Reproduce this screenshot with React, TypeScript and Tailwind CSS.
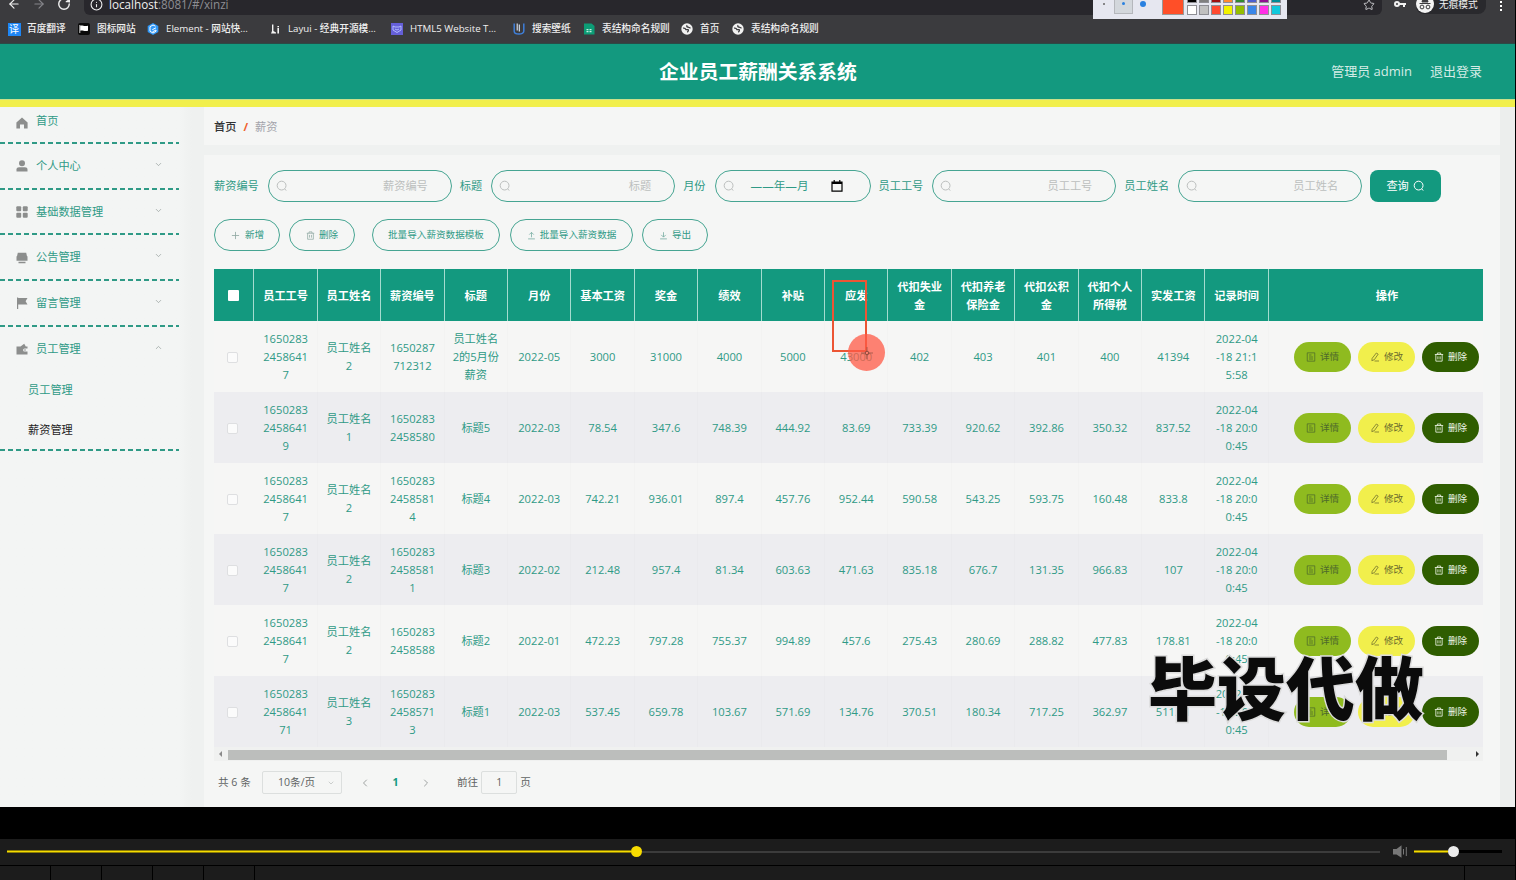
import React from "react";
import {
  ArrowLeft,
  ArrowRight,
  ChevronDown,
  ChevronLeft,
  ChevronRight,
  ChevronUp,
  Info,
  Plus,
  RotateCw,
  Star,
} from "lucide-react";

type IconProps = { className?: string };

function SearchIcon({ className }: IconProps) {
  return (
    <svg viewBox="0 0 12 12" className={className} fill="none" stroke="currentColor" strokeWidth="1">
      <circle cx="5.6" cy="5.6" r="4.4" />
      <path d="M8.7 8.8 10.2 10.6" />
    </svg>
  );
}

function TrashIcon({ className }: IconProps) {
  return (
    <svg viewBox="0 0 12 12" className={className} fill="none" stroke="currentColor" strokeWidth="1">
      <path d="M1 3h10M2.2 3v8h7.6V3M4 3V1.2h4V3M4.7 5.2v3.6M7.3 5.2v3.6" />
    </svg>
  );
}

function DocIcon({ className }: IconProps) {
  return (
    <svg viewBox="0 0 12 12" className={className} fill="none" stroke="currentColor" strokeWidth="0.9">
      <path d="M1.5 1h9v10h-9zM3.6 3.6h3M3.6 6h4.8M3.6 8.4h4.8" />
    </svg>
  );
}

function EditIcon({ className }: IconProps) {
  return (
    <svg viewBox="0 0 12 12" className={className} fill="none" stroke="currentColor" strokeWidth="0.9">
      <path d="M7.6 1.2 9.8 2.6 5.2 9.2 2.2 10.4 2.6 7.6zM5.4 10.8h5.4" />
    </svg>
  );
}

function UploadIcon({ className }: IconProps) {
  return (
    <svg viewBox="0 0 12 12" className={className} fill="none" stroke="currentColor" strokeWidth="1">
      <path d="M1.5 10.5h9M6 8.4V2M3 4.8 6 1.8l3 3" />
    </svg>
  );
}

function DownloadIcon({ className }: IconProps) {
  return (
    <svg viewBox="0 0 12 12" className={className} fill="none" stroke="currentColor" strokeWidth="1">
      <path d="M1.5 10.5h9M6 1.6V8M3 5.2l3 3 3-3" />
    </svg>
  );
}

function CalendarIcon({ className }: IconProps) {
  return (
    <svg viewBox="0 0 12 12" className={className} fill="none" stroke="currentColor" strokeWidth="1.2">
      <path d="M1 2h10v9.2H1zM3.2 0v2M8.8 0v2" />
      <path d="M1 3h10" strokeWidth="2" />
    </svg>
  );
}

function HomeIcon({ className }: IconProps) {
  return (
    <svg viewBox="0 0 12 12" className={className} fill="currentColor">
      <path d="M6 .6 11.6 5.500V11.500H8V7.500H4v4H.4v-6z" />
    </svg>
  );
}

function UserIcon({ className }: IconProps) {
  return (
    <svg viewBox="0 0 12 12" className={className} fill="currentColor">
      <circle cx="6" cy="3.2" r="3" />
      <path d="M.5 9.5C.5 8 1.6 7.2 3 7.2h6c1.4 0 2.5.8 2.5 2.3V11.6H.5z" />
    </svg>
  );
}

function GridIcon({ className }: IconProps) {
  return (
    <svg viewBox="0 0 12 12" className={className} fill="currentColor">
      <rect x="0.3" y="0.3" width="4.9" height="4.9" rx="1" />
      <rect x="6.8" y="0.3" width="4.9" height="4.9" rx="1" />
      <rect x="0.3" y="6.8" width="4.9" height="4.9" rx="1" />
      <rect x="6.8" y="6.8" width="4.9" height="4.9" rx="1" />
    </svg>
  );
}

function PrinterIcon({ className }: IconProps) {
  return (
    <svg viewBox="0 0 12 12" className={className} fill="currentColor">
      <path d="M1.8.8h8.400l.8 3.500H1zM.5 4.200h11v4.600H.5zM2.500 9.800h7v1.400h-7z" />
    </svg>
  );
}

function FlagIcon({ className }: IconProps) {
  return (
    <svg viewBox="0 0 12 12" className={className} fill="currentColor">
      <path d="M1 .5h1.200V12H1zM2.200 1h9.300L9.600 4.300l1.900 3.300H2.200z" />
    </svg>
  );
}

function WalletIcon({ className }: IconProps) {
  return (
    <svg viewBox="0 0 12 12" className={className} fill="currentColor">
      <path d="M.5 3.500h4L8.200.8l1.600 2.700h1.700v2H8.600a1.500 1.500 0 0 0 0 3h2.900v3H.5z" />
      <circle cx="9" cy="7" r=".8" />
    </svg>
  );
}

function GlobeIcon() {
  return (
    <svg viewBox="0 0 12 12" className="size-3">
      <circle cx="6" cy="6" r="5.700" fill="#f1f1f1" />
      <path
        d="M2 5.200c1.500-.4 2.500.3 3 1.500h2.200c.6.8-.2 2-1 2.600M6.200 2.300c-.9.8-.3 1.600.6 1.700.8.1.9 1 2.800.8"
        stroke="#3b3b3e"
        strokeWidth="1.300"
        fill="none"
      />
    </svg>
  );
}

const bookmarks = [
  {
    width: "w-[70px]",
    label: "百度翻译",
    icon: <span className="flex size-[13px] shrink-0 items-center justify-center bg-[#1e86f5] text-[10px] leading-none text-white">译</span>,
  },
  {
    width: "w-[69px]",
    label: "图标网站",
    icon: (
      <svg viewBox="0 0 12 12" className="size-3">
        <rect width="12" height="12" rx="2" fill="#0a0a0a" />
        <path d="M1.800 2v8" stroke="#fff" strokeWidth=".8" />
        <path d="M2.200 2.700c2-1 3.500 1 7.800 0v5c-4 1-5.500-1-7.800 0z" fill="#fff" />
      </svg>
    ),
  },
  {
    width: "w-[122px]",
    label: "Element - 网站快...",
    icon: (
      <svg viewBox="0 0 12 12" className="size-3">
        <path d="M6 0l5.300 3v6L6 12 .7 9V3z" fill="#2f97f7" />
        <path d="M8.500 3.200 6 2 3 3.700v4.600L6 10l3-1.700V7L5.500 8.800M9 4.800 5.300 6.700" stroke="#fff" strokeWidth="1" fill="none" />
      </svg>
    ),
  },
  {
    width: "w-[122px]",
    label: "Layui - 经典开源模...",
    icon: (
      <svg viewBox="0 0 12 12" className="size-3" fill="#f4f4f4">
        <path d="M3 1.500h1.400v6.500L7 9.600V10.600H2L3 8zM8.400 5h1.600v5.600H8.400zM8.400 3h1.600v1.200H8.400z" />
      </svg>
    ),
  },
  {
    width: "w-[122px]",
    label: "HTML5 Website T...",
    icon: (
      <svg viewBox="0 0 12 12" className="size-3">
        <rect width="12" height="12" fill="#655fd8" />
        <path d="M2 3l2 1h4l2-1v4L6 9.500 2 7z" fill="none" stroke="#b9c4ff" strokeWidth=".9" />
        <path d="M4 6l2 1 2-1" fill="none" stroke="#b9c4ff" strokeWidth=".9" />
      </svg>
    ),
  },
  {
    width: "w-[70px]",
    label: "搜索壁纸",
    icon: (
      <svg viewBox="0 0 12 12" className="size-3" fill="none">
        <path d="M1.200.5v7.700c0 3.800 9.600 3.800 9.600 0V.5" stroke="#3f7fd9" strokeWidth="1.500" />
        <path d="M4.200.5v7M6.300 1.500v7" stroke="#dfe9f7" strokeWidth="1.100" />
      </svg>
    ),
  },
  {
    width: "w-[98px]",
    label: "表结构命名规则",
    icon: (
      <svg viewBox="0 0 12 12" className="size-3">
        <path d="M1 .5h7.500L11.500 3v8.500H1z" fill="#0c9d76" />
        <path d="M3.500 6h2v1.200h-2zM6.500 6h2v1.200h-2zM3.500 8h2v1.200h-2zM6.500 8h2v1.200h-2z" fill="#c7efe2" />
      </svg>
    ),
  },
  { width: "w-[51px]", label: "首页", icon: <GlobeIcon /> },
  { width: "w-[100px]", label: "表结构命名规则", icon: <GlobeIcon /> },
];

const menu = [
  { label: "个人中心", Icon: UserIcon },
  { label: "基础数据管理", Icon: GridIcon },
  { label: "公告管理", Icon: PrinterIcon },
  { label: "留言管理", Icon: FlagIcon },
];

const columns = [
  "员工工号",
  "员工姓名",
  "薪资编号",
  "标题",
  "月份",
  "基本工资",
  "奖金",
  "绩效",
  "补贴",
  "应发",
  "代扣失业\n金",
  "代扣养老\n保险金",
  "代扣公积\n金",
  "代扣个人\n所得税",
  "实发工资",
  "记录时间",
];

const rows = [
  ["1650283\n2458641\n7", "员工姓名\n2", "1650287\n712312", "员工姓名\n2的5月份\n薪资", "2022-05", "3000", "31000", "4000", "5000", "43000", "402", "403", "401", "400", "41394", "2022-04\n-18 21:1\n5:58"],
  ["1650283\n2458641\n9", "员工姓名\n1", "1650283\n2458580", "标题5", "2022-03", "78.54", "347.6", "748.39", "444.92", "83.69", "733.39", "920.62", "392.86", "350.32", "837.52", "2022-04\n-18 20:0\n0:45"],
  ["1650283\n2458641\n7", "员工姓名\n2", "1650283\n2458581\n4", "标题4", "2022-03", "742.21", "936.01", "897.4", "457.76", "952.44", "590.58", "543.25", "593.75", "160.48", "833.8", "2022-04\n-18 20:0\n0:45"],
  ["1650283\n2458641\n7", "员工姓名\n2", "1650283\n2458581\n1", "标题3", "2022-02", "212.48", "957.4", "81.34", "603.63", "471.63", "835.18", "676.7", "131.35", "966.83", "107", "2022-04\n-18 20:0\n0:45"],
  ["1650283\n2458641\n7", "员工姓名\n2", "1650283\n2458588", "标题2", "2022-01", "472.23", "797.28", "755.37", "994.89", "457.6", "275.43", "280.69", "288.82", "477.83", "178.81", "2022-04\n-18 20:0\n0:45"],
  ["1650283\n2458641\n71", "员工姓名\n3", "1650283\n2458571\n3", "标题1", "2022-03", "537.45", "659.78", "103.67", "571.69", "134.76", "370.51", "180.34", "717.25", "362.97", "511.31", "2022-04\n-18 20:0\n0:45"],
];

const palette = [
  ["#000000", "#7f7f7f", "#a01010", "#ff8a30", "#2f8a2f", "#4a5fd0", "#8f1090", "#008b95"],
  ["#ffffff", "#c0c0c0", "#ff4a30", "#f2f200", "#94bd00", "#3a86e8", "#ff2fe6", "#10c8dc"],
];

function BrowserChrome() {
  return (
    <div className="relative flex h-11 shrink-0 flex-col border-b border-[#2b4a46] bg-[#3b3b3e] text-[#f0f0f0]">
      <div className="flex h-[15px] items-start overflow-hidden">
        <div className="flex w-[84px] shrink-0 items-center gap-[11px] pl-[7px]">
          <ArrowLeft className="-mt-[3px] size-[14px]" />
          <ArrowRight className="-mt-[3px] size-[14px] text-[#85858a]" />
          <RotateCw className="-mt-[3px] size-[14px]" strokeWidth={2.4} />
        </div>
        <div className="flex h-[15px] w-[1298px] items-start rounded-b-md bg-[#28272c] pl-[6px]">
          <Info className="-mt-0.5 size-[13px]" />
          <span className="-mt-[5px] ml-1.5 text-[11.700px] leading-[18px]">
            localhost<span className="text-[#8d8d92]">:8081/#/xinzi</span>
          </span>
          <Star className="mr-[7px] -mt-px ml-auto size-3 text-[#c4c4c8]" />
        </div>
        <svg viewBox="0 0 12 8" className="mt-px ml-3 h-2 w-3" fill="none" stroke="#f0f0f0">
          <circle cx="3" cy="3" r="2" strokeWidth="2" />
          <path d="M5 3h7M10 3v3" strokeWidth="2" />
        </svg>
        <div className="ml-[10px] flex h-[14px] w-[70px] items-start rounded-b-lg bg-[#29292d]">
          <svg viewBox="0 0 18 18" className="-mt-[5px] size-[18px] shrink-0">
            <circle cx="9" cy="9" r="9" fill="#f4f4f4" />
            <path d="M3.500 8.500h11M6 7l.8-3h4.400l.8 3z" stroke="#3b3b3e" fill="#3b3b3e" />
            <circle cx="6" cy="12" r="1.900" stroke="#3b3b3e" fill="none" />
            <circle cx="12" cy="12" r="1.900" stroke="#3b3b3e" fill="none" />
          </svg>
          <span className="-mt-[4px] ml-[5px] text-[9.700px] leading-[18px] whitespace-nowrap">无痕模式</span>
        </div>
        <div className="mt-px ml-[14px] flex flex-col gap-[2px]">
          <i className="size-[2px] bg-white" />
          <i className="size-[2px] bg-white" />
          <i className="size-[2px] bg-white" />
        </div>
      </div>
      <div className="flex h-7 items-center pt-px pl-2">
        {bookmarks.map((item, i) => (
          <div key={i} className={`flex shrink-0 items-center gap-[7px] whitespace-nowrap ${item.width}`}>
            <span className="flex w-3 shrink-0 justify-center">{item.icon}</span>
            <span className="text-[9.700px] font-medium">{item.label}</span>
          </div>
        ))}
      </div>

      {/* Annotation palette over the browser */}
      <div className="absolute top-0 left-[1093px] flex h-[19px] w-[194px] items-start bg-[#e6e7f0]">
        <div className="flex h-2 w-[21px] items-center justify-center">
          <i className="size-[2px] rounded-full bg-[#666]" />
        </div>
        <div className="flex h-[14px] w-[19px] justify-center border border-t-0 border-[#b5b7bc] bg-[#d3d7dc] pt-[2px]">
          <i className="size-[3px] rounded-full bg-[#2a80e0]" />
        </div>
        <i className="mt-px ml-[7px] size-[6px] rounded-full bg-[#2a80e0]" />
        <div className="ml-[16px] h-[15px] w-[22px] border border-t-0 border-[#999] bg-[#ff4f28]" />
        <div className="ml-[3px] flex flex-col gap-[2px]">
          {palette.map((line, i) => (
            <div key={i} className="flex gap-[2px]">
              {line.map((color) => (
                <i
                  key={color}
                  className={`w-[10px] border border-[#8e8e94] ${i === 0 ? "h-[3px] border-t-0" : "h-[10px]"}`}
                  style={{ backgroundColor: color }}
                />
              ))}
            </div>
          ))}
        </div>
      </div>
    </div>
  );
}

function Sidebar() {
  return (
    <aside className="w-[204px] shrink-0 bg-linear-to-r from-[#f3f5f4] from-88% to-[#eff1f0] to-94% text-[11.200px] text-[#2f9a86]">
      <div className="w-[179px]">
        <div className="flex h-[35px] items-center pb-[6px] pl-4">
          <HomeIcon className="mt-[3px] mr-2 size-3 text-[#8c8e8d]" />
          首页
        </div>
        <DashedLine />
        {menu.map(({ label, Icon }) => (
          <React.Fragment key={label}>
            <div className="flex h-[43.700px] items-center pt-px pr-4 pl-4">
              <Icon className="mr-2 size-3 text-[#8c8e8d]" />
              {label}
              <ChevronDown className="-mt-1 ml-auto size-[9px] text-[#8f9a97]" strokeWidth={1.8} />
            </div>
            <DashedLine />
          </React.Fragment>
        ))}
        <div className="flex h-[43.700px] items-center pt-px pr-4 pl-4">
          <WalletIcon className="mr-2 size-3 text-[#8c8e8d]" />
          员工管理
          <ChevronUp className="-mt-1 ml-auto size-[9px] text-[#8f9a97]" strokeWidth={1.8} />
        </div>
        <div className="flex h-[39.500px] items-center pt-px pl-7">员工管理</div>
        <div className="flex h-[39.500px] items-center pt-px pl-7 text-[#1f1f1f]">薪资管理</div>
        <DashedLine />
      </div>
    </aside>
  );
}

function DashedLine() {
  return (
    <div className="h-[2px] bg-[repeating-linear-gradient(90deg,#2f9a86_0,#2f9a86_5px,transparent_5px,transparent_8px)]" />
  );
}

function Field({ label }: { label: string }) {
  return (
    <label className="mr-2 flex items-center">
      {label}
      <span className="ml-[9px] flex h-8 w-[184px] items-center justify-between rounded-full border border-[#46a592] pr-[23px] pl-[7px] text-[#bcbfbe]">
        <SearchIcon className="size-3" />
        {label}
      </span>
    </label>
  );
}

function SearchForm() {
  return (
    <div className="flex h-8 items-center text-[11.200px] whitespace-nowrap text-[#2f9a86]">
      <Field label="薪资编号" />
      <Field label="标题" />
      <label className="mr-2 flex items-center">
        月份
        <span className="ml-[9px] flex h-8 w-[156px] items-center rounded-full border border-[#46a592] pl-[7px]">
          <SearchIcon className="mr-4 size-3 text-[#bcbfbe]" />
          <span className="text-[11.600px]">——年—月</span>
          <CalendarIcon className="ml-[22px] size-3 text-black" />
        </span>
      </label>
      <Field label="员工工号" />
      <Field label="员工姓名" />
      <button className="flex h-8 w-[71px] items-center justify-center gap-1 rounded-lg bg-[#13997f] text-white">
        查询
        <SearchIcon className="size-3" />
      </button>
    </div>
  );
}

function PillButton({ icon, label, className }: { icon?: React.ReactNode; label: string; className: string }) {
  return (
    <button className={`flex h-8 items-center justify-center gap-1 rounded-full border border-[#46a592] ${className}`}>
      {icon}
      {label}
    </button>
  );
}

function Toolbar() {
  return (
    <div className="mt-[17px] flex text-[9.600px] text-[#2f9a86]">
      <PillButton className="mr-[9px] w-[66px]" icon={<Plus className="size-[11px] text-[#8fa8a2]" strokeWidth={1.8} />} label="新增" />
      <PillButton className="mr-[17px] w-[66px]" icon={<TrashIcon className="size-[9px] text-[#8fa8a2]" />} label="删除" />
      <PillButton className="mr-[10px] w-[128px]" label="批量导入薪资数据模板" />
      <PillButton className="mr-[9px] w-[123px]" icon={<UploadIcon className="size-[9px] text-[#6fa89c]" />} label="批量导入薪资数据" />
      <PillButton className="w-[66px]" icon={<DownloadIcon className="size-[9px] text-[#6fa89c]" />} label="导出" />
    </div>
  );
}

function SalaryTable() {
  return (
    <div className="mt-[18px] w-[1269px]">
      <div className="grid h-[52px] grid-cols-[40.400px_repeat(16,63.420px)_1fr] bg-[#13997f] text-[11.200px] leading-[18px] font-bold text-white">
        <div className="flex items-center justify-center border-r border-[#a5dccf]">
          <span className="size-[11px] rounded-[1px] bg-white" />
        </div>
        {columns.map((name) => (
          <div key={name} className="flex items-center justify-center border-r border-[#a5dccf] pt-px text-center whitespace-pre">
            {name}
          </div>
        ))}
        <div className="flex items-center justify-center pt-px pl-[22px]">操作</div>
      </div>
      {rows.map((cells, i) => (
        <div
          key={i}
          className={`grid h-[71px] grid-cols-[40.400px_repeat(16,63.420px)_1fr] text-[11.200px] leading-[18px] text-[#2f9a86] ${
            i % 2 ? "bg-[#ededf0]" : "bg-[#f6f6f5]"
          }`}
        >
          <div className="flex items-center justify-center pt-px pr-[3px]">
            <span className="size-[11px] rounded-[2px] border border-[#dedfe1] bg-[#fbfbfb]" />
          </div>
          {cells.map((cell, j) => (
            <div key={j} className="flex items-center justify-center border-r border-black/[0.01] pt-px text-center whitespace-pre">
              {cell}
            </div>
          ))}
          <div className="flex items-center justify-end gap-[7px] pr-1 text-[9.600px]">
            <button className="flex h-[30px] w-[57px] items-center justify-center gap-1 rounded-full bg-[#8fbb1f] text-[#4e6a2c]">
              <DocIcon className="size-[10px]" />
              详情
            </button>
            <button className="flex h-[30px] w-[57px] items-center justify-center gap-1 rounded-full bg-[#f1ef4c] text-[#6b6a2c]">
              <EditIcon className="size-[10px]" />
              修改
            </button>
            <button className="flex h-[30px] w-[57px] items-center justify-center gap-1 rounded-full bg-[#2f5d00] text-[#eef5e6]">
              <TrashIcon className="size-[10px]" />
              删除
            </button>
          </div>
        </div>
      ))}
      {/* Horizontal scrollbar */}
      <div className="flex h-[14px] items-center bg-[#f0f1f0] pr-1 pl-[5px]">
        <i className="border-y-[3px] border-r-[3px] border-y-transparent border-r-[#8a8a8a]" />
        <span className="mt-px ml-[6px] h-[10px] w-[1219px] bg-[#bcbebc]" />
        <i className="ml-auto border-y-[3px] border-l-[3px] border-y-transparent border-l-[#333]" />
      </div>
    </div>
  );
}

function Pagination() {
  return (
    <div className="mt-[10px] flex h-[23px] items-center pl-1 text-[10.600px] whitespace-nowrap text-[#5f6463]">
      <span className="w-[44px]">共 6 条</span>
      <span className="flex h-[23px] w-[80px] items-center rounded-[2px] border border-[#dcdfde] pr-[6px] pl-[15px]">
        10条/页
        <ChevronDown className="ml-auto size-2 text-[#b5b9b8]" />
      </span>
      <ChevronLeft className="ml-[17px] size-3 text-[#9fa3a2]" />
      <span className="w-[49px] text-center font-bold text-[#13997f]">1</span>
      <ChevronRight className="size-3 text-[#9fa3a2]" />
      <span className="ml-[25px]">前往</span>
      <span className="mx-[3px] flex h-[23px] w-9 items-center justify-center rounded-[2px] border border-[#dcdfde]">1</span>
      页
    </div>
  );
}

function PlayerBar() {
  return (
    <div className="w-[1515px] bg-black pt-8">
      <div className="flex h-[26px] items-center bg-[#1c1c1c] pb-px pl-[7px]">
        <div className="flex w-[1373px] items-center">
          <span className="h-[3px] w-[624px] border-y border-[#8c7d05] bg-[#f5dc00]" />
          <span className="size-[11px] rounded-full bg-[#f8dc00]" />
          <span className="h-[2px] flex-1 bg-[#3c3c3c]" />
        </div>
        <svg viewBox="0 0 15 13" className="ml-3 h-[13px] w-[15px]">
          <path d="M1 4h3.500L9.500.3v12.400L4.500 9.500H1z" fill="#777" />
          <path d="M11.500 4v5.500M14.300 2v9" stroke="#777" />
        </svg>
        <div className="ml-[7px] flex w-[88px] items-center">
          <span className="h-[3px] w-[34px] border-y border-[#8c7d05] bg-[#f5dc00]" />
          <span className="size-[11px] rounded-full bg-[#ececec]" />
          <span className="h-[3px] flex-1 bg-black" />
        </div>
      </div>
      <div className="mt-px flex h-[14px] gap-px bg-black">
        <span className="w-[50px] bg-[#1c1c1c]" />
        <span className="w-[50px] bg-[#1c1c1c]" />
        <span className="w-[50px] bg-[#1c1c1c]" />
        <span className="w-[50px] bg-[#1c1c1c]" />
        <span className="w-[50px] bg-[#1c1c1c]" />
        <span className="flex-1 bg-[#1c1c1c]" />
        <span className="w-[50px] bg-[#1c1c1c]" />
      </div>
    </div>
  );
}

export default function App() {
  return (
    <div className="relative flex h-[880px] w-[1516px] flex-col overflow-hidden bg-black font-['Open_Sans','Noto_Sans_CJK_SC',sans-serif]">
      <div className="flex h-[807px] w-[1515px] shrink-0 flex-col overflow-hidden bg-[#f5f6f5]">
        <BrowserChrome />
        <header className="grid h-[55px] shrink-0 grid-cols-3 items-center bg-[#13997f] pt-px pr-[33px] text-[13px] text-[#d5ece6]">
          <span />
          <h1 className="ml-[34px] text-center text-[19.800px] font-bold whitespace-nowrap text-white">企业员工薪酬关系系统</h1>
          <div className="flex justify-end gap-[18px]">
            <span>管理员 admin</span>
            <span>退出登录</span>
          </div>
        </header>
        <div className="h-2 shrink-0 border-t border-[#c9e08a] bg-[#f1ef4c]" />
        <div className="flex min-h-0 flex-1">
          <Sidebar />
          <main className="flex-1">
            <div className="flex h-[38px] items-center pt-[2px] pl-[10px] text-[11.200px]">
              <span className="font-medium text-[#303133]">首页</span>
              <span className="mx-[7px] font-bold text-[#f0602c]">/</span>
              <span className="text-[#a3a4ab]">薪资</span>
            </div>
            <div className="h-[10px] bg-[#eff1f0]" />
            <div className="pt-[15px] pl-[10px]">
              <SearchForm />
              <Toolbar />
              <SalaryTable />
              <Pagination />
            </div>
          </main>
          <div className="w-[15px] bg-[#eceeed]" />
        </div>
      </div>
      <PlayerBar />

      {/* Screen annotation and pointer highlight */}
      <div className="absolute top-[280px] left-[832px] h-[72px] w-[35px] border-2 border-[#ec5534]" />
      <div className="absolute top-[334px] left-[848px] flex size-[37px] items-center justify-center rounded-full bg-[#ff5a45]/75">
        <svg viewBox="0 0 12 12" className="size-3" fill="none" stroke="#8d4a3c">
          <circle cx="6" cy="6" r="1.8" />
          <path d="M6 0v4M6 8v4M0 6h4M8 6h4" strokeWidth=".7" />
        </svg>
      </div>
      <div className="absolute top-[638px] left-[1148px] text-[69px] leading-[100px] font-black whitespace-nowrap text-[#0b0b0b] [-webkit-text-stroke:3px_#dcdcdc] [paint-order:stroke]">
        毕设代做
      </div>
    </div>
  );
}
